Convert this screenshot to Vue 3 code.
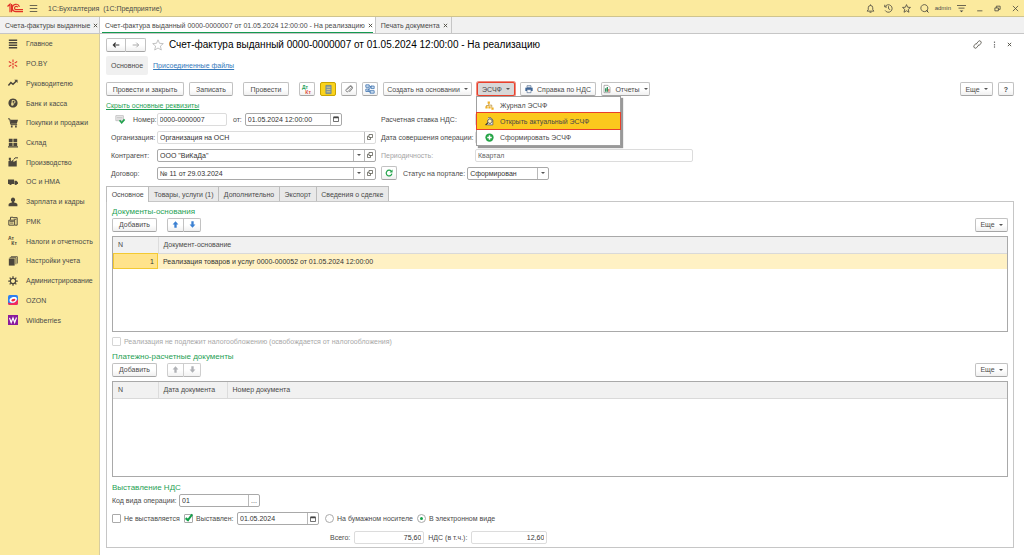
<script setup>
import { ref } from 'vue'

const sections = [
  { name: 'Главное', parts: [{ d: 'M1 1.5h10M1 4.5h10M1 7.5h10M1 10.5h10', w: 1.8 }] },
  { name: 'PO.BY', parts: [{ d: 'M6 0.5v3.500M6 8v3.500M1 3l3 2M8 7l3 2M1 9l3-2M8 5l3-2', w: 1.3, c: '#e0342c' }, { d: 'M5 5h2v2h-2z', f: '#e0342c' }] },
  { name: 'Руководителю', parts: [{ d: 'M0.500 9l3-3.500 2.500 2L10 3.500', w: 1.8 }, { d: 'M7.500 2h4v4z', f: '#4b463c' }] },
  { name: 'Банк и касса', parts: [{ d: 'M6 .5a5.500 5.500 0 1 0 .01 0z', f: '#4b463c' }, { d: 'M5 9.500V3h1.800a1.600 1.600 0 0 1 0 3.300H3.800M3.800 8H7', w: 1.1, c: '#fbea9e' }] },
  { name: 'Покупки и продажи', parts: [{ d: 'M0 1h2l1.500 7H11', w: 1.2 }, { d: 'M2.500 2H12l-1.500 5H3.500z', f: '#4b463c' }, { d: 'M3.500 9h2v2.500h-2zM8.500 9h2v2.500h-2z', f: '#4b463c' }] },
  { name: 'Склад', parts: [{ d: 'M1 1h4.500v4.200H1zM6.500 1H11v4.200H6.500zM1 6h4.500v3.500H1zM6.500 6H11v3.500H6.500zM0 10h12v1.300H0z', f: '#4b463c' }] },
  { name: 'Производство', parts: [{ d: 'M0.500 11.500V5l3-2v2.500l3-2.500v3l4-2V11.500zM1 1h2.500v2L1 4z', f: '#4b463c' }, { d: 'M7 3l1.500-2H12', w: 1.2 }] },
  { name: 'ОС и НМА', parts: [{ d: 'M0 3h7.300v5.500H0zM7.800 4.500h2.400l1.800 2v2H7.800z', f: '#4b463c' }, { d: 'M1.500 8a1.500 1.500 0 1 0 3 0zM7.800 8a1.500 1.500 0 1 0 3 0z', f: '#4b463c' }] },
  { name: 'Зарплата и кадры', parts: [{ d: 'M6 .5a2.600 2.800 0 0 1 1.300 5.200v.8c2 .5 4 1.200 4 2.500v2H.7V9c0-1.300 2-2 4-2.500v-.8A2.600 2.800 0 0 1 6 .5z', f: '#4b463c' }] },
  { name: 'РМК', parts: [{ d: 'M1 5h7v6H1zM3 4.500v-3h3M6 2h5v9H8.500', w: 1.2 }, { d: 'M2 6.500h5M2.500 8.500h4M7 4h3', w: 1 }] },
  { name: 'Налоги и отчетность', tax: true, parts: [] },
  { name: 'Настройки учета', parts: [{ d: 'M1 3h7v8.500H1z', f: '#4b463c' }, { d: 'M2 2h7.500v8M3.500 .8h7.700V9', w: 1 }] },
  { name: 'Администрирование', parts: [{ d: 'M6 2.800a3.200 3.200 0 1 0 .01 0z', w: 1.600 }, { d: 'M6 .3v2M6 9.700v2M.3 6h2M9.700 6h2M2 2l1.300 1.300M8.700 8.700L10 10M2 10l1.300-1.300M8.700 3.300L10 2', w: 1.500 }] },
  { name: 'OZON', parts: [{ d: 'M2 0h8a2 2 0 0 1 2 2v8a2 2 0 0 1-2 2H2a2 2 0 0 1-2-2V2a2 2 0 0 1 2-2z', f: '#2d7ff0' }, { d: 'M0 9Q6 12 12 5v5a2 2 0 0 1-2 2H2a2 2 0 0 1-2-2z', f: '#f42a5c' }, { d: 'M2 7.500C1 4.500 4 2.500 7.500 2.500S11.500 5 9.500 7.500 3 10 2 7.500z', f: '#fff' }, { d: 'M4 7C3.800 5.500 5.500 4.500 7.500 4.500S9 6 8 7 4.500 8.500 4 7z', f: '#f42a3c' }] },
  { name: 'Wildberries', parts: [{ d: 'M0 0h12v12H0z', f: '#8a1b9d' }, { d: 'M1.800 3.500l2 5.500 2.200-5.500L8 9l2.200-6', w: 1.400, c: '#fff' }] }
]

const menu = ['Журнал ЭСЧФ', 'Открыть актуальный ЭСЧФ', 'Сформировать ЭСЧФ']
const formTabs = ['Основное', 'Товары, услуги (1)', 'Дополнительно', 'Экспорт', 'Сведения о сделке']
const activeTab = ref('Основное')
const number = ref('0000-0000007')
const date = ref('01.05.2024 12:00:00')
const organization = ref('Организация на ОСН')
const partner = ref('ООО "ВиКаДа"')
const contract = ref('№ 11 от 29.03.2024')
const period = ref('Квартал')
const status = ref('Сформирован')
const code = ref('01')
const issuedDate = ref('01.05.2024')
const total = ref('75,60')
const vat = ref('12,60')
const notIssued = ref(false)
const issued = ref(true)
const medium = ref('electronic')
</script>

<template>
  <div class="app">
    <header class="titlebar">
      <svg class="logo" viewBox="0 0 16 10"><path d="M0.500 3.500L3 1.200v8M4.600 1v8.200M12.500 3.700A3.700 3.700 0 1 0 9 8.700H16M10.800 4.300A1.700 1.700 0 1 0 9 6.700H16" fill="none" stroke="#e12f26" stroke-width="1.200" /></svg>
      <button class="bare" aria-label="Меню"><svg class="i9" viewBox="0 0 12 12"><path d="M1 2h10M1 6h10M1 10h10" class="ln" /></svg></button>
      <span class="product">1С:Бухгалтерия&nbsp; (1С:Предприятие)</span>
      <div class="system">
        <button class="bare" aria-label="Уведомления"><svg class="i9" viewBox="0 0 12 12"><path d="M1.500 9.500h9L9 7.500V5a3 3 0 0 0-6 0v2.500zM6 .5V2M4.700 11h2.600" class="ln" /></svg></button>
        <button class="bare" aria-label="История"><svg class="i9" viewBox="0 0 12 12"><path d="M1.500 3.500A5 5 0 1 1 1.500 8.500M1 1v3h3M6 3v3.300l2.300 1.200" class="ln" /></svg></button>
        <button class="bare" aria-label="Избранное"><svg class="i9" viewBox="0 0 12 12"><path d="M6 .8l1.500 3.500 3.800.3-2.900 2.500.9 3.900L6 9l-3.300 2 .9-3.900L.7 4.600l3.800-.3z" class="ln" /></svg></button>
        <button class="bare" aria-label="Поиск"><svg class="i9" viewBox="0 0 12 12"><path d="M5.800 .8a4.700 4.700 0 1 0 .01 0zM9 9l2.500 2.500" class="ln" /><path d="M8 8.500h2.500V11z" fill="#333" /></svg></button>
        <span class="user">admin</span>
        <button class="bare" aria-label="Настройки"><svg class="i9" viewBox="0 0 12 12"><path d="M0 2h12M2 5.500h8" class="ln" /><path d="M3.500 8.500h5L6 11z" fill="#444" /></svg></button>
        <button class="bare win" aria-label="Свернуть"><svg class="i7" viewBox="0 0 12 12"><path d="M2 10h9" class="ln thick" /></svg></button>
        <button class="bare win" aria-label="Развернуть"><svg class="i7" viewBox="0 0 12 12"><path d="M1.500 5h6v5h-6zM4 5V2h6.500v5.500h-3" class="ln thick" /></svg></button>
        <button class="bare win" aria-label="Закрыть"><svg class="i7" viewBox="0 0 12 12"><path d="M1.500 1.500l9 9M10.500 1.500l-9 9" class="ln thick" /></svg></button>
      </div>
    </header>

    <nav class="windows">
      <div class="wtab first"><a href="#">Счета-фактуры выданные</a><button class="bare" aria-label="Закрыть"><svg class="i5" viewBox="0 0 6 6"><path d="M1 1l4 4M5 1l-4 4" class="ln" /></svg></button></div>
      <div class="wtab current"><a href="#">Счет-фактура выданный 0000-0000007 от 01.05.2024 12:00:00 - На реализацию</a><button class="bare" aria-label="Закрыть"><svg class="i5" viewBox="0 0 6 6"><path d="M1 1l4 4M5 1l-4 4" class="ln" /></svg></button></div>
      <div class="wtab"><a href="#">Печать документа</a><button class="bare" aria-label="Закрыть"><svg class="i5" viewBox="0 0 6 6"><path d="M1 1l4 4M5 1l-4 4" class="ln" /></svg></button></div>
    </nav>

    <div class="body">
      <aside class="side">
        <nav class="sections">
          <a v-for="s in sections" :key="s.name" href="#">
            <svg class="sicon" viewBox="0 0 12 12">
              <path v-for="(p, i) in s.parts" :key="i" :d="p.d" :fill="p.f || 'none'" :stroke="p.w ? p.c || '#4b463c' : 'none'" :stroke-width="p.w || 0" />
              <template v-if="s.tax"><text x="0" y="5" class="tax">Ат</text><text x="4" y="11" class="tax">Кт</text></template>
            </svg>
            <span>{{ s.name }}</span>
          </a>
        </nav>
      </aside>

      <main class="main">
        <div class="head">
          <div class="pair">
            <button class="btn" aria-label="Назад"><svg class="i8" viewBox="0 0 12 12"><path d="M11 6H2M5.500 2.500L2 6l3.500 3.500" fill="none" stroke="#333" stroke-width="1.700" /></svg></button>
            <button class="btn" aria-label="Вперед"><svg class="i8" viewBox="0 0 12 12"><path d="M1 6h9M6.500 2.500L10 6 6.500 9.500" fill="none" stroke="#aaa" stroke-width="1.500" /></svg></button>
          </div>
          <button class="bare star" aria-label="В избранное"><svg viewBox="0 0 12 12"><path d="M6 .8l1.500 3.500 3.800.3-2.900 2.500.9 3.900L6 9l-3.300 2 .9-3.900L.7 4.600l3.800-.3z" fill="none" stroke="#b5b5b5" stroke-width=".8" /></svg></button>
          <h1>Счет-фактура выданный 0000-0000007 от 01.05.2024 12:00:00 - На реализацию</h1>
          <div class="headtools">
            <button class="bare" aria-label="Ссылка"><svg class="i9" viewBox="0 0 12 12"><path d="M5 4.500l2-2.500a2 2 0 0 1 3.500 2.500l-2 2.500H6.500M7 7.500l-2 2.500a2 2 0 0 1-3.500-2.500l2-2.500h2" class="ln" /></svg></button>
            <button class="bare" aria-label="Еще"><svg class="i7" viewBox="0 0 12 12"><path d="M5 1h2v2.500H5zM5 5h2v2.500H5zM5 9h2v2.500H5z" fill="#777" /></svg></button>
            <button class="bare" aria-label="Закрыть"><svg class="i5" viewBox="0 0 6 6"><path d="M1 1l4 4M5 1l-4 4" class="ln" /></svg></button>
          </div>
        </div>

        <nav class="subnav"><a href="#" class="chip">Основное</a><a href="#" class="blue">Присоединенные файлы</a></nav>

        <div class="toolbar">
          <button class="btn w78">Провести и закрыть</button>
          <button class="btn w44">Записать</button>
          <button class="btn w46 gap">Провести</button>
          <button class="btn w16 gap" aria-label="Дт Кт"><svg class="i10" viewBox="0 0 12 12"><text x="0" y="5.500" class="dt">Дт</text><text x="4" y="11.500" class="kt">Кт</text></svg></button>
          <button class="btn w16 yellow" aria-label="Структура"><svg class="i9" viewBox="0 0 12 12"><path d="M2.500 0.500h7v11h-7z" fill="#8398a0" stroke="#6a8796" /><path d="M3.500 3h5M3.500 6h5M3.500 9h5" stroke="#e6d48c" /></svg></button>
          <button class="btn w16" aria-label="Файлы"><svg class="i8" viewBox="0 0 12 12"><path d="M3 7l4.500-4.500a1 1 0 0 1 2 2L5 9.500a2 2 0 0 1-3-3l5-5a3 3 0 0 1 4 4L6.500 10.500" fill="none" stroke="#666" stroke-width="1.200" /></svg></button>
          <button class="btn w16" aria-label="Движения"><svg class="i10" viewBox="0 0 12 12"><path d="M1 1h4v3H1zM7 2.500h4v3H7zM1 6h4v3H1zM6 8h5v3H6z" fill="#d4e4f3" stroke="#4779b3" /><path d="M5 2l3 2M4 8l3 2M8 2L3 8" stroke="#4779b3" /></svg></button>
          <button class="btn w89">Создать на основании<i class="caret"></i></button>
          <div class="drop">
            <button class="btn pressed w38" aria-haspopup="menu">ЭСЧФ<i class="caret"></i></button>
            <div class="menu" role="menu">
              <button v-for="(m, i) in menu" :key="m" role="menuitem" :class="{ hot: i === 1 }">
                <svg v-if="i === 0" class="i9" viewBox="0 0 12 12"><path d="M5 3v3H2v3M5 5.500h4V9" fill="none" stroke="#b78a2c" /><path d="M3.500 .5h3v3h-3zM.5 7h3v3h-3zM4.500 7h3v3h-3zM8.500 8.500h3v3h-3z" fill="#efaf26" /></svg>
                <svg v-else-if="i === 1" class="i9" viewBox="0 0 12 12"><path d="M3 10.500h7.500V4L8 1H4" fill="#eee" stroke="#555" /><path d="M6.500 2.500a3 3 0 1 0 .01 0z" fill="#fff3c0" stroke="#333" /><path d="M4 7.500L.8 10.800" stroke="#333" stroke-width="1.800" /></svg>
                <svg v-else class="i9" viewBox="0 0 12 12"><circle cx="6" cy="6" r="5.500" fill="#25a447" /><path d="M6 3v6M3 6h6" stroke="#fff" stroke-width="2" /></svg>
                <span>{{ m }}</span>
              </button>
            </div>
          </div>
          <button class="btn w76"><svg class="i8" viewBox="0 0 12 12"><path d="M3 1h6v3H3z" fill="#dfe8f2" stroke="#566f91" /><path d="M.5 4h11v5H.5z" fill="#3e6596" /><path d="M3 7h6v4.500H3z" fill="#fff" stroke="#566f91" /></svg>Справка по НДС</button>
          <button class="btn w49"><svg class="i8" viewBox="0 0 12 12"><path d="M1.500 .5h6l3 3v8h-9z" fill="#fff" stroke="#888" /><path d="M3 5h2v5H3zM5.500 3h2v7h-2z" fill="#36925d" /><path d="M8 6h1.500v4H8z" fill="#d24d3c" /></svg>Отчеты<i class="caret"></i></button>
          <button class="btn w33 push">Еще<i class="caret"></i></button>
          <button class="btn w16 help">?</button>
        </div>

        <div class="toggle"><a href="#" class="green">Скрыть основные реквизиты</a></div>

        <div class="form">
          <div class="col left">
            <div class="row">
              <svg class="post" viewBox="0 0 12 12"><path d="M1 2h9v6H1z" fill="#f6f6f6" stroke="#bbb" /><path d="M2 4h7M2 6h7" stroke="#bbb" /><path d="M5.500 7.500l2.500 3 3.500-4" fill="none" stroke="#21a14d" stroke-width="2" /></svg>
              <label for="number">Номер:</label>
              <span class="field number pale"><input id="number" v-model="number" /></span>
              <label for="date" class="from">от:</label>
              <span class="field date"><input id="date" v-model="date" /><button aria-label="Календарь"><svg class="i6" viewBox="0 0 12 12"><path d="M1 2.500h10v8.500H1z" fill="none" stroke="#444" stroke-width="1.500" /><path d="M1 1h10v3.500H1z" fill="#444" /></svg></button></span>
            </div>
            <div class="row">
              <label for="org" class="name">Организация:</label>
              <span class="field pale grow"><input id="org" v-model="organization" /><button aria-label="Открыть"><svg class="i6" viewBox="0 0 12 12"><path d="M4 1h7v6H4zM4 4.500H1V11h6V7" class="ln thick" /></svg></button></span>
            </div>
            <div class="row">
              <label for="partner" class="name">Контрагент:</label>
              <span class="field grow"><input id="partner" v-model="partner" /><button aria-label="Выбрать"><i class="caret"></i></button><button aria-label="Открыть"><svg class="i6" viewBox="0 0 12 12"><path d="M4 1h7v6H4zM4 4.500H1V11h6V7" class="ln thick" /></svg></button></span>
            </div>
            <div class="row">
              <label for="contract" class="name">Договор:</label>
              <span class="field grow"><input id="contract" v-model="contract" /><button aria-label="Выбрать"><i class="caret"></i></button><button aria-label="Открыть"><svg class="i6" viewBox="0 0 12 12"><path d="M4 1h7v6H4zM4 4.500H1V11h6V7" class="ln thick" /></svg></button></span>
            </div>
          </div>
          <div class="col right">
            <div class="row"><label for="rate" class="rname">Расчетная ставка НДС:</label><span class="field pale opdate"><input id="rate" /></span></div>
            <div class="row"><label for="opdate" class="rname">Дата совершения операции:</label><span class="field pale opdate"><input id="opdate" /></span></div>
            <div class="row"><label for="period" class="rname dim">Периодичность:</label><span class="field pale grow"><input id="period" v-model="period" class="soft" /></span></div>
            <div class="row">
              <button class="btn w16" aria-label="Обновить"><svg class="i8" viewBox="0 0 12 12"><path d="M9.500 3.500A4.300 4.300 0 1 0 10.300 7" fill="none" stroke="#23a34a" stroke-width="1.800" /><path d="M11.300 .8v4.500H6.800z" fill="#23a34a" /></svg></button>
              <label for="status" class="status">Статус на портале:</label>
              <span class="field state"><select id="status" v-model="status"><option>Сформирован</option></select><span class="arrow"><i class="caret"></i></span></span>
            </div>
          </div>
        </div>

        <div class="tabs" role="tablist">
          <button v-for="t in formTabs" :key="t" role="tab" :class="{ on: t === activeTab }" @click="activeTab = t">{{ t }}</button>
        </div>

        <section class="panel">
          <h2>Документы-основания</h2>
          <div class="bar">
            <button class="btn w45">Добавить</button>
            <div class="pair arrows">
              <button class="btn" aria-label="Вверх"><svg class="i7" viewBox="0 0 12 12"><path d="M6 .5l5 5.500H8v5.500H4V6H1z" fill="#3b80d2" /></svg></button>
              <button class="btn" aria-label="Вниз"><svg class="i7" viewBox="0 0 12 12"><path d="M6 11.500l5-5.500H8V.5H4V6H1z" fill="#3b80d2" /></svg></button>
            </div>
            <button class="btn w33 push">Еще<i class="caret"></i></button>
          </div>
          <div class="grid">
            <table>
              <thead><tr><th class="cn">N</th><th>Документ-основание</th></tr></thead>
              <tbody><tr><td class="sel">1</td><td>Реализация товаров и услуг 0000-000052 от 01.05.2024 12:00:00</td></tr></tbody>
            </table>
          </div>
          <div class="exempt"><input id="exempt" type="checkbox" disabled /><label for="exempt">Реализация не подлежит налогообложению (освобождается от налогообложения)</label></div>

          <h2>Платежно-расчетные документы</h2>
          <div class="bar">
            <button class="btn w45">Добавить</button>
            <div class="pair arrows off">
              <button class="btn" aria-label="Вверх"><svg class="i7" viewBox="0 0 12 12"><path d="M6 .5l5 5.500H8v5.500H4V6H1z" fill="#9da0a5" /></svg></button>
              <button class="btn" aria-label="Вниз"><svg class="i7" viewBox="0 0 12 12"><path d="M6 11.500l5-5.500H8V.5H4V6H1z" fill="#9da0a5" /></svg></button>
            </div>
            <button class="btn w33 push">Еще<i class="caret"></i></button>
          </div>
          <div class="grid">
            <table>
              <thead><tr><th class="cn">N</th><th class="cd">Дата документа</th><th>Номер документа</th></tr></thead>
            </table>
          </div>

          <h2 class="vat">Выставление НДС</h2>
          <div class="line code"><label for="code">Код вида операции:</label><span class="field"><input id="code" v-model="code" /><button aria-label="Выбрать">...</button></span></div>
          <div class="line flags">
            <input id="notissued" v-model="notIssued" type="checkbox" /><label for="notissued" class="l1">Не выставляется</label>
            <input id="issued" v-model="issued" type="checkbox" /><label for="issued" class="l2">Выставлен:</label>
            <span class="field issued"><input v-model="issuedDate" aria-label="Дата выставления" /><button aria-label="Календарь"><svg class="i6" viewBox="0 0 12 12"><path d="M1 2.500h10v8.500H1z" fill="none" stroke="#444" stroke-width="1.500" /><path d="M1 1h10v3.500H1z" fill="#444" /></svg></button></span>
            <input id="paper" v-model="medium" type="radio" value="paper" /><label for="paper" class="l3">На бумажном носителе</label>
            <input id="electronic" v-model="medium" type="radio" value="electronic" /><label for="electronic">В электронном виде</label>
          </div>
          <div class="line totals">
            <label for="total">Всего:</label><span class="field pale t1"><input id="total" v-model="total" /></span>
            <label for="vat">НДС (в т.ч.):</label><span class="field pale t2"><input id="vat" v-model="vat" /></span>
          </div>
        </section>
      </main>
    </div>
  </div>
</template>

<style>
body { margin: 0; background: #fff; }
</style>

<style scoped>
.app { min-height: 100vh; display: flex; flex-direction: column; font: 7px/9px "Liberation Sans", Arial, sans-serif; color: #4a4a4a; background: #fff; }
.app, .app *, .app *::after { box-sizing: border-box; }
button, input, select { font: inherit; color: inherit; margin: 0; padding: 0; }
a { color: inherit; text-decoration: none; }
svg { display: block; flex: none; overflow: visible; }
.i5 { width: 5px; height: 5px; } .i6 { width: 6px; height: 6px; } .i7 { width: 7px; height: 7px; }
.i8 { width: 8px; height: 8px; } .i9 { width: 9px; height: 9px; } .i10 { width: 10px; height: 10px; }
.ln { fill: none; stroke: #4c4a40; stroke-width: 1.1; }
.thick { stroke-width: 1.400; }
.bare { border: 0; background: none; display: flex; align-items: center; justify-content: center; }
.caret { width: 0; height: 0; border: 2px solid transparent; border-top-color: #555; border-bottom: 0; }

.titlebar { height: 17px; display: flex; align-items: center; background: #fbea9e; border-bottom: 1px solid #cfc48e; padding: 0 4px 0 7px; }
.logo { width: 16px; height: 10px; margin-right: 6px; }
.product { margin-left: 10px; }
.system { margin-left: auto; display: flex; align-items: center; gap: 9px; }
.user { font-size: 6px; margin: 0 -3px; }
.win { width: 9px; }

.windows { height: 17px; display: flex; background: #f1f1f1; border-bottom: 1px solid #c6c6c6; white-space: nowrap; }
.wtab { display: flex; align-items: center; justify-content: space-between; gap: 3px; padding: 0 3px 0 5px; border-right: 1px solid #c6c6c6; }
.wtab.first { width: 100px; }
.wtab.current { padding-right: 2px; background: linear-gradient(#149a50, #149a50) 2px 100% / calc(100% - 4px) 1px no-repeat #fff; }

.body { flex: 1; display: flex; }
.side { flex: none; width: 100px; background: #fbea9e; border-right: 1px solid #d7cda0; }
.sections { height: 296px; display: grid; grid-template-rows: repeat(15, 1fr); }
.sections a { display: flex; align-items: center; padding-left: 8px; gap: 8px; white-space: nowrap; }
.sicon { width: 10px; height: 10px; }
.tax { font: bold 6px "Liberation Sans", sans-serif; fill: #4b463c; }

.main { flex: 1; min-width: 0; padding: 0 10px 7px 6px; display: flex; flex-direction: column; }
.head { display: flex; align-items: center; height: 21px; }
.pair { display: flex; }
.pair .btn { width: 20px; height: 14px; border-radius: 2px 0 0 2px; }
.pair .btn + .btn { border-radius: 0 2px 2px 0; border-left: 0; }
.star { width: 12px; height: 12px; margin: 0 5px 0 6px; }
.star svg { width: 12px; height: 12px; }
h1 { margin: 0; font-size: 10px; line-height: 12px; font-weight: normal; color: #000; white-space: nowrap; }
.headtools { margin-left: auto; display: flex; align-items: center; gap: 9px; padding-right: 2px; }

.subnav { display: flex; align-items: center; height: 21px; gap: 5px; }
.chip { background: #f0f0f0; border-radius: 2px; padding: 5px; }
.blue { color: #3579bb; text-decoration: underline; }
.green { color: #1f9f55; text-decoration: underline; }

.toolbar { display: flex; align-items: center; gap: 5px; height: 26px; white-space: nowrap; }
.btn { height: 14px; flex: none; display: flex; align-items: center; justify-content: center; gap: 4px; border: 1px solid #c2c2c2; border-bottom-color: #a5a5a5; border-radius: 2px; background: linear-gradient(#fff 50%, #f0f0f0); white-space: nowrap; }
.w16 { width: 16px; } .w33 { width: 33px; } .w38 { width: 38px; } .w44 { width: 44px; } .w45 { width: 45px; } .w46 { width: 46px; }
.w49 { width: 49px; } .w76 { width: 76px; } .w78 { width: 78px; } .w89 { width: 89px; }
.gap { margin-left: 5px; }
.push { margin-left: auto; }
.yellow { background: #fbd31c; border-color: #c9a400; }
.help { font-weight: bold; }
.dt, .kt { font: bold 6px "Liberation Sans", sans-serif; fill: #25a25a; }
.kt { fill: #dc4b3b; }
.drop { position: relative; }
.pressed { background: #d8d8d8; border: 1px solid #e8402c; box-shadow: 0 0 0 1px #f08a7c; }
.menu { position: absolute; z-index: 5; top: 14px; left: -1px; width: 145px; background: #fff; border: 1px solid #a0a0a0; box-shadow: 2px 2px 1px rgba(0, 0, 0, .4); }
.menu button { display: flex; align-items: center; gap: 6px; width: 100%; height: 16px; padding-left: 8px; border: 0; background: #fff; text-align: left; }
.menu .hot { position: relative; z-index: 1; background: #fbc91d; outline: 1px solid #e8402c; }

.toggle { height: 8px; line-height: 8px; }
.form { display: flex; gap: 5px; }
.col { display: flex; flex-direction: column; gap: 4px; padding-top: 2px; }
.left { width: 270px; }
.right { width: 312px; }
.row { display: flex; align-items: center; height: 14px; white-space: nowrap; }
.post { width: 10px; height: 10px; margin: 0 8px 0 9px; }
.field { display: flex; height: 13px; border: 1px solid #a9a9a9; border-radius: 2px; background: #fff; min-width: 0; }
.field input, .field select { flex: 1; min-width: 0; width: 0; border: 0; background: none; padding: 0 2px; outline: 0; appearance: none; color: #333; }
.field button, .arrow { width: 11px; flex: none; border: 0; border-left: 1px solid #b9b9b9; background: none; display: flex; align-items: center; justify-content: center; }
.pale { border-color: #dcdcdc; }
.grow { flex: 1; }
.name { width: 51px; padding-left: 5px; }
.number { width: 71px; margin-left: auto; }
.from { margin: 0 3px 0 6px; }
.date { width: 98px; margin-right: 34px; }
.rname { width: 94px; }
.dim { color: #a5a5a5; }
.field .soft { color: #666; }
.opdate { width: 60px; }
.status { margin: 0 2px 0 6px; }
.state { width: 82px; }

.tabs { display: flex; margin-top: 6px; width: 283px; height: 15px; }
.tabs button { flex: 1 0 auto; padding: 0 4px; border: 1px solid #bdbdbd; border-bottom: 0; border-left: 0; background: #e9e9e9; white-space: nowrap; }
.tabs button:first-child { border-left: 1px solid #bdbdbd; }
.tabs .on { background: #fff; position: relative; margin-bottom: -1px; }

.panel { flex: 1; border: 1px solid #c6c6c6; padding: 4px 5px 0; display: flex; flex-direction: column; }
h2 { margin: 0; font-size: 8px; line-height: 11px; font-weight: normal; color: #1f9f55; }
.bar { display: flex; height: 15px; align-items: center; }
.arrows { margin-left: 10px; }
.arrows .btn { width: 17px; }
.off { opacity: .8; }
.grid { margin-top: 4px; height: 96px; border: 1px solid #a9a9a9; }
table { width: 100%; border-collapse: collapse; table-layout: fixed; }
th { height: 16px; padding: 0 5px; text-align: left; font-weight: normal; background: #f1f1f1; border-bottom: 1px solid #d9d9d9; border-right: 1px solid #dcdcdc; }
th:last-child { border-right: 0; }
th.cn { width: 45px; }
th.cd { width: 69px; }
td { height: 16px; padding: 0 5px; background: #fff1c4; color: #333; }
td.sel { background: #ffe38b; text-align: right; padding-right: 4px; outline: 1px solid #f3c932; outline-offset: -1px; }
.exempt { display: flex; align-items: center; height: 18px; gap: 3px; color: #a8a8a8; margin-bottom: 1px; }
input[type="checkbox"], input[type="radio"] { appearance: none; flex: none; width: 9px; height: 9px; border: 1px solid #aaa; border-radius: 1px; background: #fff; position: relative; }
input[type="radio"] { border-radius: 50%; }
input[type="checkbox"]:disabled { border-color: #d5d5d5; }
input[type="checkbox"]:checked::after { content: ""; position: absolute; left: 2px; top: -2px; width: 4px; height: 8px; border: solid #14a04a; border-width: 0 2px 2px 0; transform: rotate(38deg); }
input[type="radio"]:checked::after { content: ""; position: absolute; left: 2px; top: 2px; width: 3px; height: 3px; border-radius: 50%; background: #14a04a; }
.vat { margin-top: 5px; }
.line { display: flex; align-items: center; white-space: nowrap; }
.code { height: 15px; }
.code label { width: 67px; }
.code .field { width: 81px; }
.flags { height: 21px; gap: 3px; }
.l1 { width: 57px; }
.l2 { width: 38px; }
.issued { width: 82px; margin-right: 3px; }
.l3 { width: 77px; }
.totals { height: 17px; gap: 4px; padding-left: 218px; }
.totals input { text-align: right; }
.t1 { width: 70px; }
.t2 { width: 76px; }
</style>
